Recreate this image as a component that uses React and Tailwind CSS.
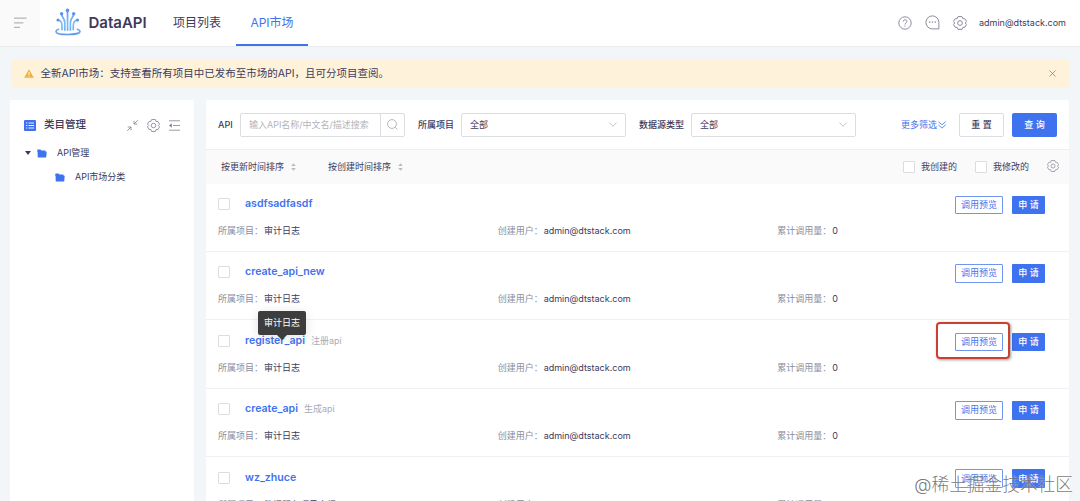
import { useState } from 'react';

const apiList = [
  { id: 1, name: 'asdfsadfasdf', desc: '', project: '审计日志' },
  { id: 2, name: 'create_api_new', desc: '', project: '审计日志' },
  { id: 3, name: 'register_api', desc: '注册api', project: '审计日志', tip: true, marked: true },
  { id: 4, name: 'create_api', desc: '生成api', project: '审计日志' },
  { id: 5, name: 'wz_zhuce', desc: '', project: '数据服务项目介绍' },
];

const Logo = () => (
  <svg className="w-[26px] h-7" viewBox="0 0 26 28" fill="none">
    <defs>
      <linearGradient id="logo" x1="0" y1="0" x2="0" y2="28" gradientUnits="userSpaceOnUse">
        <stop stopColor="#5b93ea" />
        <stop offset="0.6" stopColor="#7cc0f7" />
        <stop offset="1" stopColor="#5b93ea" />
      </linearGradient>
    </defs>
    <g stroke="url(#logo)" strokeWidth="1.7" strokeLinecap="round">
      <path d="M12.5 2.5 12.6 22M6.6 6c0 3.5 3.2 4 3.2 8.5V22M18.6 6c0 3.5-3.2 4-3.2 8.5V22M3 12c2.6.5 4 2.5 4 5.5V21.5M22.3 12c-2.6.5-4 2.5-4 5.5V21.5" />
      <path d="M3.5 21.2C1.8 21.8 1 22.5 1 23.4c0 2 5.5 3.1 11.8 3.1S25 25.4 25 23.4c0-.9-.9-1.6-2.6-2.2" />
    </g>
    <g fill="#5b93ea">
      <circle cx="12.5" cy="2.4" r="1.8" />
      <circle cx="6.6" cy="5.8" r="1.7" />
      <circle cx="18.7" cy="5.8" r="1.7" />
      <circle cx="3" cy="12" r="1.6" />
      <circle cx="22.5" cy="12" r="1.6" />
    </g>
  </svg>
);

const GearIcon = ({ className }) => (
  <svg className={className} viewBox="0 0 14 14" fill="none" stroke="currentColor" strokeWidth="0.9" strokeLinejoin="round">
    <path d="M5 .6h4l.8 2 2.1.2L13.5 5.6 12.2 7l1.3 1.4-1.6 2.8-2.1.2-.8 2H5l-.8-2-2.1-.2L.5 8.4 1.8 7 .5 5.6l1.6-2.8 2.1-.2z" />
    <circle cx="7" cy="7" r="2.4" />
  </svg>
);

const FolderIcon = () => (
  <svg className="w-[10px] h-[9px] shrink-0 text-[#3f72ee]" viewBox="0 0 10 9" fill="currentColor">
    <path d="M.3 1Q.3.5.8.5h2.7l1 1.1h3.6q.5 0 .5.5v.9H.3z" />
    <path d="M.6 2.8h9.1L9.3 7.8q-.1.6-.6.6H1.2q-.5 0-.5-.5z" />
  </svg>
);

const Checkbox = () => (
  <span className="block w-3 h-3 shrink-0 rounded-[1px] border border-[#dcdde0] bg-white" />
);

const SortIcon = () => (
  <svg className="ml-[7px] w-[5px] h-2" viewBox="0 0 5 8" fill="#b9bac2">
    <path d="M2.5.2 4.8 3H.2zM2.5 7.8.2 5h4.6z" />
  </svg>
);

const Select = () => (
  <div className="flex h-6 w-[165px] items-center justify-between rounded-[2px] border border-[#dcdde0] pl-2 pr-2">
    <span>全部</span>
    <svg className="w-2 h-[5px]" viewBox="0 0 8 5" fill="none" stroke="#b9bac2" strokeWidth="0.8">
      <path d="m.4.5 3.6 3.8L7.6.5" />
    </svg>
  </div>
);

const Header = () => (
  <header className="flex h-[47px] shrink-0 items-center border-b border-[#e9ecef] bg-white">
    <div className="flex h-full w-10 items-center justify-center bg-[#fafafa]">
      <svg className="w-[13px] h-3" viewBox="0 0 13 12" stroke="#b5b5ba" strokeWidth="1.2">
        <path d="M0 1.2h12.6M0 5.8h9.3M0 10.4h6" />
      </svg>
    </div>
    <div className="ml-[15px] -mt-0.5">
      <Logo />
    </div>
    <h1 className="ml-[7.5px] w-[84.5px] text-[15px] leading-none font-semibold text-[#3d3a5c] -mt-px">DataAPI</h1>
    <nav className="flex h-full text-xs">
      <a className="flex items-center" href="#projects">项目列表</a>
      <a
        className="ml-[15px] flex w-[72px] items-center justify-center border-y-2 border-t-transparent border-b-[#3f72ee] text-[#3f72ee]"
        href="#market"
      >
        API市场
      </a>
    </nav>
    <div className="ml-auto flex items-center pr-[14px] text-[#7f8195] -mt-px">
      <svg className="w-[14px] h-[14px]" viewBox="0 0 14 14" fill="none" stroke="currentColor" strokeWidth="0.9">
        <circle cx="7" cy="7" r="6.2" />
        <path d="M5.2 5.6c0-2.5 3.7-2.4 3.7-.1 0 1.4-1.9 1.4-1.9 3M7 9.5v1.1" />
      </svg>
      <svg className="ml-[13px] w-[15px] h-[15px]" viewBox="0 0 15 15" fill="none" stroke="currentColor" strokeWidth="0.9">
        <path d="M13.9 13.9H7.4a6.5 6.5 0 1 1 6.5-6.5z" />
        <path d="M4 7.2h1.3M6.8 7.2h1.3M9.6 7.2h1.3" strokeWidth="1.3" />
      </svg>
      <GearIcon className="ml-[13px] w-[14px] h-[14px]" />
      <span className="ml-[12px] text-[9px] text-[#3d3a5c]">admin@dtstack.com</span>
    </div>
  </header>
);

const Sidebar = () => (
  <aside className="w-[184px] shrink-0 rounded-t-[2px] bg-white pt-[17px]">
    <div className="flex h-4 items-center pl-[14px] pr-[14px] text-[#7f8195]">
      <svg className="w-3 h-[11px]" viewBox="0 0 12 11">
        <rect width="12" height="11" rx="1" fill="#3f72ee" />
        <path d="M2 3h1.3M2 5.5h1.3M2 8h1.3M4.5 3H10M4.5 5.5H10M4.5 8H10" stroke="#fff" strokeWidth="0.9" />
      </svg>
      <h2 className="ml-[8px] text-[10.5px] font-medium text-[#3d3a5c]">类目管理</h2>
      <svg className="ml-auto w-[11px] h-[11px]" viewBox="0 0 11 11" fill="none" stroke="currentColor" strokeWidth="0.8">
        <path d="M10.8.2 7 4M7 .8V4h3.3M.2 10.8 4 7M.7 7H4v3.3" />
      </svg>
      <GearIcon className="ml-[9px] w-[13px] h-[13px]" />
      <svg className="ml-[9px] w-[11px] h-[11px]" viewBox="0 0 11 11" fill="none" stroke="currentColor" strokeWidth="0.8">
        <path d="M0 .8h11M4 5.5h7M0 10.2h11" />
        <path d="m0 5.5 2.8-2.2v4.4z" fill="currentColor" stroke="none" />
      </svg>
    </div>
    <ul>
      <li className="mt-[12px] flex h-4 items-center pl-[15px]">
        <svg className="w-[6px] h-1" viewBox="0 0 6 4" fill="#3d3a5c">
          <path d="M0 0h6L3 4z" />
        </svg>
        <span className="ml-[6px] flex"><FolderIcon /></span>
        <span className="ml-[10px]">API管理</span>
      </li>
      <li className="mt-2 flex h-4 items-center pl-[45px]">
        <FolderIcon />
        <span className="ml-[10px]">API市场分类</span>
      </li>
    </ul>
  </aside>
);

const ApiRow = ({ api }) => (
  <li className="h-[68.4px] border-b border-[#eff1f4] pl-3 pr-6 pt-[11px]">
    <div className="flex h-[19px] items-center">
      <Checkbox />
      <div className="relative ml-[15px]">
        <a className="text-[10.6px] font-semibold text-[#3f72ee]" href="#api">{api.name}</a>
        {api.tip && (
          <div className="absolute bottom-[14px] left-[13px] flex h-6 w-12 items-center justify-center rounded-[2px] bg-[#3d3d3d] text-white shadow-[0_2px_12px_rgba(0,0,0,0.12)]">
            审计日志
            <svg className="absolute top-full left-[19px] w-[10px] h-[5px]" viewBox="0 0 10 5" fill="#3d3d3d">
              <path d="M0 0h10L5 5z" />
            </svg>
          </div>
        )}
      </div>
      <span className="ml-[6px] text-[#a9abb5]">{api.desc}</span>
      <div className="relative ml-auto flex translate-y-px gap-[9px]">
        {api.marked && (
          <span className="absolute -top-[11px] -left-[19px] h-[37px] w-[74px] rounded-[4px] border-2 border-[#cb3f30] shadow-[1px_1px_3px_rgba(0,0,0,0.4)]" />
        )}
        <button className="h-[18.5px] w-12 rounded-[1px] border border-[#6f95f1] bg-white text-[#3f72ee]">调用预览</button>
        <button className="h-[18.5px] w-[33px] rounded-[1px] bg-[#3f72ee] font-medium text-white">申 请</button>
      </div>
    </div>
    <div className="mt-[9.5px] grid h-4 w-[839px] grid-cols-3 items-center whitespace-nowrap text-[#8b8d9a]">
      <p>所属项目：<span className="ml-[1px] text-[#3d3a5c]">{api.project}</span></p>
      <p>创建用户：<span className="ml-[1px] text-[#3d3a5c]">admin@dtstack.com</span></p>
      <p>累计调用量：<span className="ml-[1px] text-[#3d3a5c]">0</span></p>
    </div>
  </li>
);

const App = () => {
  const [showNotice, setShowNotice] = useState(true);

  return (
    <div className="relative flex h-[501px] w-[1080px] flex-col overflow-hidden bg-[#f3f6f9] font-['Inter','Noto_Sans_CJK_SC',sans-serif] text-[9px] leading-4 text-[#3d3a5c]">
      <Header />
      {showNotice && (
        <div className="mx-[10.5px] mt-3 flex h-[29px] shrink-0 items-center rounded-[3px] bg-[#fef3da] px-[13px]">
          <svg className="w-[10px] h-[9px]" viewBox="0 0 10 9">
            <path d="M5 .3 9.8 8.8H.2z" fill="#f0b03c" />
            <path d="M5 3v3M5 6.8v1" stroke="#fff" strokeWidth="0.9" />
          </svg>
          <p className="ml-[7px] text-[10.5px]">全新API市场：支持查看所有项目中已发布至市场的API，且可分项目查阅。</p>
          <button className="ml-auto mr-px" onClick={() => setShowNotice(false)}>
            <svg className="w-[7px] h-[7px]" viewBox="0 0 7 7" stroke="#85828a" strokeWidth="0.8">
              <path d="m.5.5 6 6M6.5.5l-6 6" />
            </svg>
          </button>
        </div>
      )}
      <div className="mt-3 flex min-h-0 flex-1 gap-3 pl-[10px] pr-[11px]">
        <Sidebar />
        <main className="min-w-0 flex-1 rounded-t-[2px] bg-white">
          <div className="flex h-[49px] items-center pl-3 pr-3">
            <label className="w-[22px] font-medium">API</label>
            <div className="flex h-6 w-[165px] rounded-[2px] border border-[#dcdde0]">
              <span className="flex flex-1 items-center pl-2 whitespace-nowrap text-[#b3b4bc]">输入API名称/中文名/描述搜索</span>
              <span className="flex w-6 items-center justify-center border-l border-[#dcdde0]">
                <svg className="w-[11px] h-[11px]" viewBox="0 0 11 11" fill="none" stroke="#a5a6ae" strokeWidth="0.8">
                  <circle cx="5" cy="5" r="4.4" />
                  <path d="m8.2 8.2 2.2 2.2" />
                </svg>
              </span>
            </div>
            <label className="ml-[13px] mr-[7px] font-medium">所属项目</label>
            <Select />
            <label className="ml-[13px] mr-[7px] font-medium">数据源类型</label>
            <Select />
            <a className="ml-auto flex items-center text-[#3f72ee]" href="#more">
              更多筛选
              <svg className="ml-px w-2 h-2" viewBox="0 0 8 8" fill="none" stroke="currentColor" strokeWidth="0.8">
                <path d="M.4.6 4 3.8 7.6.6M.4 3.9 4 7.1l3.6-3.2" />
              </svg>
            </a>
            <button className="ml-[13px] h-6 w-[45px] rounded-[2px] border border-[#dcdde0] font-medium">重 置</button>
            <button className="ml-[8px] h-6 w-[45px] rounded-[2px] bg-[#3f72ee] font-medium text-white">查 询</button>
          </div>
          <div className="flex h-[34.6px] items-center border-t border-[#eceef1] bg-[#fafafb] pl-[15px] pr-[10px]">
            <span>按更新时间排序</span>
            <SortIcon />
            <span className="ml-[32px]">按创建时间排序</span>
            <SortIcon />
            <div className="ml-auto flex items-center">
              <Checkbox />
              <span className="ml-[6px]">我创建的</span>
              <span className="ml-[18px]"><Checkbox /></span>
              <span className="ml-[6px]">我修改的</span>
              <GearIcon className="ml-[18px] w-3 h-3 -mt-0.5 text-[#8b8d9a]" />
            </div>
          </div>
          <ul>
            {apiList.map((api) => (
              <ApiRow key={api.id} api={api} />
            ))}
          </ul>
        </main>
      </div>
      <span className="absolute right-[7px] bottom-[4px] text-[17.7px] leading-6 font-light text-[#55555a]/80 [text-shadow:0_0_2px_#fff]">@稀土掘金技术社区</span>
    </div>
  );
};

export default App;
